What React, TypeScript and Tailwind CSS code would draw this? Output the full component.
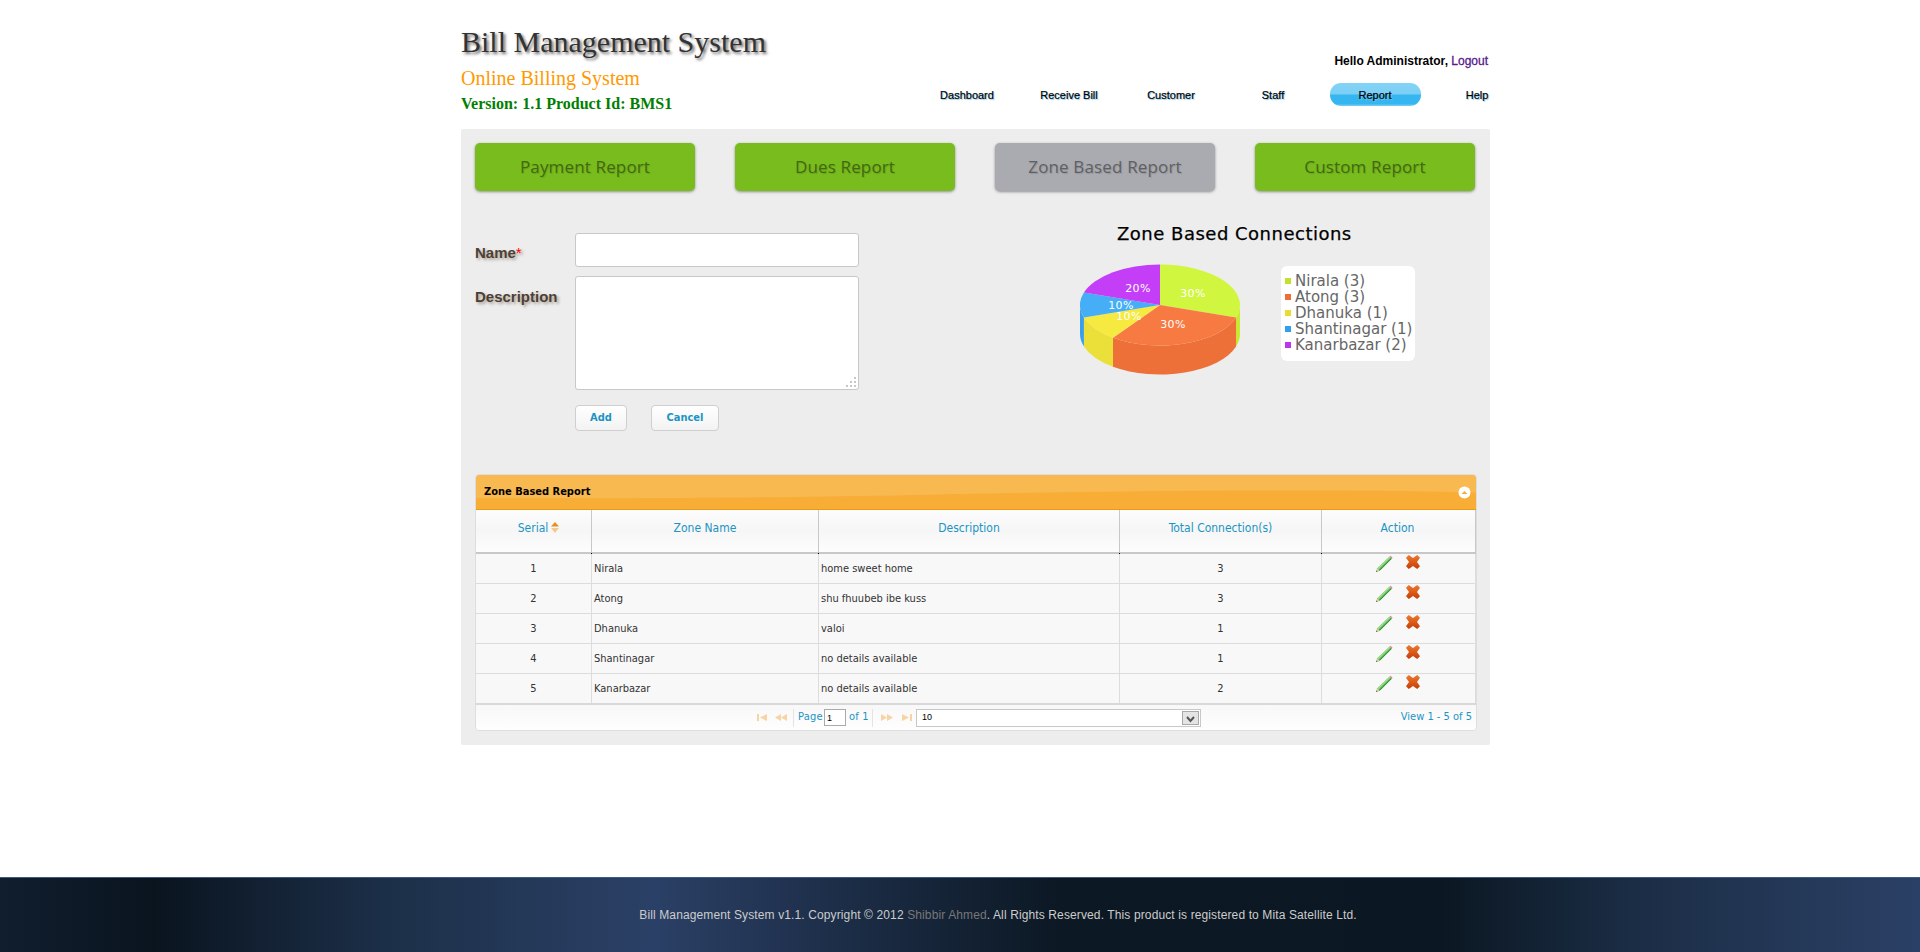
import React from "react";

const sans = "font-['Liberation_Sans',Arial,sans-serif]";
const ui = "font-['DejaVu_Sans',sans-serif]";
const uic = "font-['DejaVu_Sans_Condensed','DejaVu_Sans',sans-serif]";

const navItems = ["Dashboard", "Receive Bill", "Customer", "Staff", "Report", "Help"];
const reports = ["Payment Report", "Dues Report", "Zone Based Report", "Custom Report"];
const rows = [
  ["1", "Nirala", "home sweet home", "3"],
  ["2", "Atong", "shu fhuubeb ibe kuss", "3"],
  ["3", "Dhanuka", "valoi", "1"],
  ["4", "Shantinagar", "no details available", "1"],
  ["5", "Kanarbazar", "no details available", "2"],
];
const legend = [
  ["Nirala (3)", "bg-[#c3e02e]"],
  ["Atong (3)", "bg-[#ee6f35]"],
  ["Dhanuka (1)", "bg-[#e9dd33]"],
  ["Shantinagar (1)", "bg-[#339fec]"],
  ["Kanarbazar (2)", "bg-[#bb36ec]"],
];

const CX = 80, CY = 41, RX = 80, RY = 40.5, D = 29;
const pt = (deg: number, dy = 0) => {
  const r = (deg * Math.PI) / 180;
  return `${(CX + RX * Math.cos(r)).toFixed(2)} ${(CY + RY * Math.sin(r) + dy).toFixed(2)}`;
};
const top = (a: number, b: number) => `M${CX} ${CY}L${pt(a)}A${RX} ${RY} 0 ${b - a > 180 ? 1 : 0} 1 ${pt(b)}Z`;
const side = (a: number, b: number) =>
  `M${pt(a)}A${RX} ${RY} 0 0 1 ${pt(b)}L${pt(b, D)}A${RX} ${RY} 0 0 0 ${pt(a, D)}Z`;

function Pie() {
  return (
    <svg width="164" height="114" viewBox="0 0 164 114" className="block shrink-0">
      <path d={side(0, 18)} fill="#c8ea30" />
      <path d={side(18, 126)} fill="#ec7038" />
      <path d={side(126, 162)} fill="#ebe03a" />
      <path d={side(162, 180)} fill="#3a9fe8" />
      <path d={top(-90, 18)} fill="#d1f63f" />
      <path d={top(18, 126)} fill="#f77a42" />
      <path d={top(126, 162)} fill="#f6e93f" />
      <path d={top(162, 198)} fill="#45aef7" />
      <path d={top(198, 270)} fill="#c43ef7" />
      <g fill="#fff" fontSize="11" letterSpacing="0.3" fontFamily="'DejaVu Sans',sans-serif" textAnchor="middle">
        <text x="113" y="33">30%</text>
        <text x="93" y="64">30%</text>
        <text x="58" y="28">20%</text>
        <text x="41" y="45">10%</text>
        <text x="49" y="56">10%</text>
      </g>
    </svg>
  );
}

function Pencil() {
  return (
    <svg width="18" height="18" viewBox="0 0 17 17" className="block">
      <path d="M1 16L2.2 12.6L13.6 1.6L15.8 3.6L4.4 14.9Z" fill="#5cb85c" />
      <path d="M2.2 12.6L13.6 1.6L14.6 2.6L3.2 13.8Z" fill="#9fdc8c" />
      <path d="M4.4 14.9L15.8 3.6L15.2 3L3.8 14.3Z" fill="#2f8f36" />
      <path d="M13.6 1.6L14.8 .6L16.6 2.6L15.8 3.6Z" fill="#d98a96" />
      <path d="M1 16L2.2 12.6L4.4 14.9Z" fill="#e3c79d" />
      <path d="M1 16L1.5 14.7L2.3 15.5Z" fill="#444" />
    </svg>
  );
}

function Cross() {
  return (
    <svg width="14" height="14" viewBox="0 0 14 14" className="block">
      <defs>
        <linearGradient id="crossFill" x1="0" y1="0" x2="0" y2="1">
          <stop offset="0" stopColor="#ef7a2e" />
          <stop offset="1" stopColor="#c63d06" />
        </linearGradient>
      </defs>
      <path d="M2.8 0L7 3L11.2 0L14 2.8L11 7L14 11.2L11.2 14L7 11L2.8 14L0 11.2L3 7L0 2.8Z" fill="url(#crossFill)" />
    </svg>
  );
}

function PagerIcon({ kind }: { kind: "first" | "prev" | "next" | "last" }) {
  const d = {
    first: "M0 0h2v7H0zM10 0v7L3 3.5z",
    prev: "M6 0v7L0 3.5zM12 0v7L6 3.5z",
    next: "M0 0v7l6-3.5zM6 0v7l6-3.5z",
    last: "M0 0v7l7-3.5zM8 0h2v7H8z",
  }[kind];
  const w = kind === "first" || kind === "last" ? 10 : 12;
  return (
    <svg width={w} height="7" viewBox={`0 0 ${w} 7`} className="block">
      <path d={d} fill="#f8d3a4" />
    </svg>
  );
}

const Dot = () => <i className="absolute -bottom-[2px] -right-px h-px w-px bg-black" />;
const headCell = "relative flex justify-center pt-[9px] border-r border-[#c8c8c8]";
const bodyCell = "flex items-center pt-[1px] border-r border-[#dcdcdc] text-[#333]";

export default function App() {
  return (
    <div className="flex min-h-[952px] flex-col bg-white">
      <main className="ml-[461px] w-[1029px]">
        <header className="relative h-[129px]">
          <h1 className="absolute left-0 top-[24px] font-['Liberation_Serif',serif] text-[30px] leading-[36px] font-normal text-[#333] [text-shadow:2px_2px_3px_#666]">
            Bill Management System
          </h1>
          <p className="absolute left-0 top-[66px] font-['Liberation_Serif',serif] text-[20px] leading-[24px] text-[#f90]">
            Online Billing System
          </p>
          <p className="absolute left-0 top-[94px] font-['Liberation_Serif',serif] text-[16px] leading-[20px] font-bold text-[#008000]">
            Version: 1.1 Product Id: BMS1
          </p>
          <p className={`absolute right-[2px] top-[54px] ${sans} text-[12px] leading-[14px] font-bold text-black`}>
            Hello Administrator, <a className="font-normal text-[#551a8b] [-webkit-text-stroke:0.3px_#551a8b]">Logout</a>
          </p>
          <nav className={`absolute left-[455px] top-[83px] flex ${sans} text-[11px] leading-[22px] text-black`}>
            {navItems.map((n) => (
              <a
                key={n}
                className={`flex h-[23px] items-center justify-center [text-shadow:1px_1px_1px_#7fc6e8] [-webkit-text-stroke:0.2px_#000] ${
                  n === "Report"
                    ? "mx-[5.5px] w-[91px] rounded-[11px] bg-[linear-gradient(#83d3f6_0%,#7bcff5_48%,#35b6f0_52%,#35b6f0_90%,#7fd0f5_100%)]"
                    : "w-[102px]"
                }`}
              >
                {n}
              </a>
            ))}
          </nav>
        </header>

        <section className="h-[616px] rounded-[2px] bg-[#ededed] px-[14px] pt-[14px]">
          <div className="flex gap-[40px]">
            {reports.map((r) => (
              <a
                key={r}
                className={`flex h-[48px] w-[220px] items-center justify-center rounded-[5px] font-['Open_Sans',sans-serif] text-[17px] tracking-[0.15px] shadow-[0_1px_3px_rgba(0,0,0,0.4)] [text-shadow:1px_1px_1px_rgba(0,0,0,0.12)] ${
                  r === "Zone Based Report"
                    ? "bg-[#a9abb0] text-[#5f6063]"
                    : "bg-[#79bc1e] text-[#41690f]"
                }`}
              >
                {r}
              </a>
            ))}
          </div>

          <div className="flex h-[283px]">
            <form className="w-[486px] pt-[42px]">
              <div className="flex h-[43px]">
                <label className={`w-[100px] pt-[11px] ${sans} text-[15px] leading-[18px] font-bold text-[#4d3f35] [text-shadow:2px_2px_3px_#a89e92]`}>
                  Name<span className="font-normal text-[#f00]">*</span>
                </label>
                <input className="h-[34px] w-[284px] rounded-[3px] border border-[#c8c8c8] bg-white" />
              </div>
              <div className="flex">
                <label className={`w-[100px] pt-[12px] ${sans} text-[15px] leading-[18px] font-bold text-[#4d3f35] [text-shadow:2px_2px_3px_#a89e92]`}>
                  Description
                </label>
                <div className="relative h-[114px] w-[284px]">
                  <textarea className="block h-full w-full resize-none rounded-[3px] border border-[#c8c8c8] bg-white" />
                  <svg width="12" height="12" viewBox="0 0 12 12" className="pointer-events-none absolute bottom-[2px] right-[2px] block">
                    <g fill="#c8c8c8">
                      <rect x="9" y="1" width="2" height="2" />
                      <rect x="5" y="5" width="2" height="2" />
                      <rect x="9" y="5" width="2" height="2" />
                      <rect x="1" y="9" width="2" height="2" />
                      <rect x="5" y="9" width="2" height="2" />
                      <rect x="9" y="9" width="2" height="2" />
                    </g>
                  </svg>
                </div>
              </div>
              <div className={`ml-[100px] mt-[15px] flex gap-[24px] ${uic} text-[11px] font-bold text-[#1c94c4]`}>
                <button type="button" className="h-[26px] w-[52px] rounded-[4px] border border-[#cfcfcf] bg-[linear-gradient(#fff,#f3f3f3)]">
                  Add
                </button>
                <button type="button" className="h-[26px] w-[68px] rounded-[4px] border border-[#cfcfcf] bg-[linear-gradient(#fff,#f3f3f3)]">
                  Cancel
                </button>
              </div>
            </form>
            <div className="pt-[31px]">
              <h2 className={`ml-[156px] ${ui} text-[18px] leading-[24px] font-normal tracking-[0.5px] text-black [-webkit-text-stroke:0.25px_#000]`}>
                Zone Based Connections
              </h2>
              <div className="ml-[119px] mt-[18px] flex items-start">
                <Pie />
                <ul className={`ml-[37px] mt-[2px] h-[95px] w-[134px] rounded-[6px] bg-white pl-[4px] pt-[7px] ${ui} text-[15px] leading-[16px] text-[#666]`}>
                  {legend.map(([t, c]) => (
                    <li key={t} className="flex items-center gap-[4px] whitespace-nowrap">
                      <span className={`h-[6px] w-[6px] ${c}`} />
                      {t}
                    </li>
                  ))}
                </ul>
              </div>
            </div>
          </div>

          <div className={`w-[1002px] overflow-hidden rounded-[4px] border border-[#dedede] ${uic} text-[11px]`}>
            <div className="relative flex h-[35px] items-center justify-between border-b border-[#ec9a11] bg-[#f9b951] pl-[8px] pr-[5px]">
              <svg viewBox="0 0 1000 35" preserveAspectRatio="none" className="absolute inset-0 block h-full w-full">
                <path d="M0 24C150 24 250 24 420 21C560 18 680 16 830 16C900 16 960 17 1000 18V35H0Z" fill="#f7ad36" />
              </svg>
              <span className="relative text-[11px] font-bold text-black">Zone Based Report</span>
              <svg width="13" height="13" viewBox="0 0 13 13" className="relative mt-[1px] block">
                <circle cx="6.5" cy="6.5" r="6" fill="#fff" />
                <path d="M3.5 8L6.5 5L9.5 8Z" fill="#f7ac33" />
              </svg>
            </div>
            <div className="grid h-[44px] grid-cols-[116px_227px_301px_202px_1fr] border-b-2 border-[#c8c8c8] bg-[linear-gradient(#fcfcfc_0%,#f6f6f6_50%,#fdfdfd_100%)] text-[12px] text-[#1c94c4]">
              <div className={`${headCell} pl-[10px]`}>
                <span>Serial</span>
                <svg width="8" height="11" viewBox="0 0 8 11" className="ml-[3px] mt-[3px] block">
                  <path d="M4 0L8 4.5H0Z" fill="#e88f1a" />
                  <path d="M4 11L8 6H0Z" fill="#f5c98e" />
                </svg>
                <Dot />
              </div>
              <div className={headCell}>Zone Name<Dot /></div>
              <div className={headCell}>Description<Dot /></div>
              <div className={headCell}>Total Connection(s)<Dot /></div>
              <div className="flex justify-center border-r border-[#c8c8c8] pr-[2px] pt-[9px]">Action</div>
            </div>
            {rows.map((r, i) => (
              <div
                key={r[0]}
                className={`grid grid-cols-[116px_227px_301px_202px_1fr] bg-[#f8f8f8] ${
                  i === rows.length - 1 ? "h-[31px] border-b-2 border-[#d8d8d8]" : "h-[30px] border-b border-[#dcdcdc]"
                }`}
              >
                <div className={`${bodyCell} justify-center`}>{r[0]}</div>
                <div className={`${bodyCell} pl-[2px]`}>{r[1]}</div>
                <div className={`${bodyCell} pl-[2px]`}>{r[2]}</div>
                <div className={`${bodyCell} justify-center`}>{r[3]}</div>
                <div className="flex items-start justify-center gap-[13px] border-r border-[#dcdcdc] pr-[3px] pt-[1px]">
                  <Pencil />
                  <Cross />
                </div>
              </div>
            ))}
            <div className="relative flex h-[25px] items-center bg-[linear-gradient(#f8f8f8,#fefefe)] text-[#1c94c4]">
              <div className="ml-[281px] flex items-center">
                <PagerIcon kind="first" />
                <span className="ml-[8px]"><PagerIcon kind="prev" /></span>
                <span className="ml-[6px] mr-[4px] h-[18px] w-px bg-[#e4e4e4]" />
                <span className="w-[26px] whitespace-nowrap text-[11px] tracking-[0.2px]">Page</span>
                <input defaultValue="1" className={`h-[17px] w-[22px] border border-[#aaa] bg-white pl-[2px] ${sans} text-[9px] text-black`} />
                <span className="ml-[3px] w-[18px] whitespace-nowrap text-[11px] tracking-[0.2px]">of 1</span>
                <span className="ml-[5px] mr-[8px] h-[18px] w-px bg-[#e4e4e4]" />
                <PagerIcon kind="next" />
                <span className="ml-[9px]"><PagerIcon kind="last" /></span>
                <div className={`ml-[4px] flex h-[18px] w-[285px] items-center justify-between border border-[#c8c8c8] bg-white pl-[5px] pr-px ${sans} text-[9px] text-black`}>
                  10
                  <svg width="17" height="14" viewBox="0 0 17 14" className="block">
                    <rect x=".5" y=".5" width="16" height="13" fill="#e4e4e4" stroke="#a8a8a8" />
                    <path d="M5 6L8.5 10L12 6" fill="none" stroke="#555" strokeWidth="2" />
                  </svg>
                </div>
              </div>
              <span className="absolute right-[4px] top-[4px] text-[11px]">View 1 - 5 of 5</span>
            </div>
          </div>
        </section>
      </main>

      <footer className="mt-auto flex h-[75px] items-center justify-center border-t border-[#3d5a85] bg-[linear-gradient(90deg,#101e2e_0%,#0a141f_8%,#1c2f48_20%,#2b4066_34%,#1c2d47_44%,#0c1824_55%,#0b1722_75%,#1b2d45_85%,#2b4066_100%)] pl-[76px]">
        <p className={`${sans} text-[12px] tracking-[0.12px] text-[#ccc]`}>
          Bill Management System v1.1. Copyright © 2012 <span className="text-[#777]">Shibbir Ahmed</span>. All Rights Reserved. This product is registered to Mita Satellite Ltd.
        </p>
      </footer>
    </div>
  );
}
